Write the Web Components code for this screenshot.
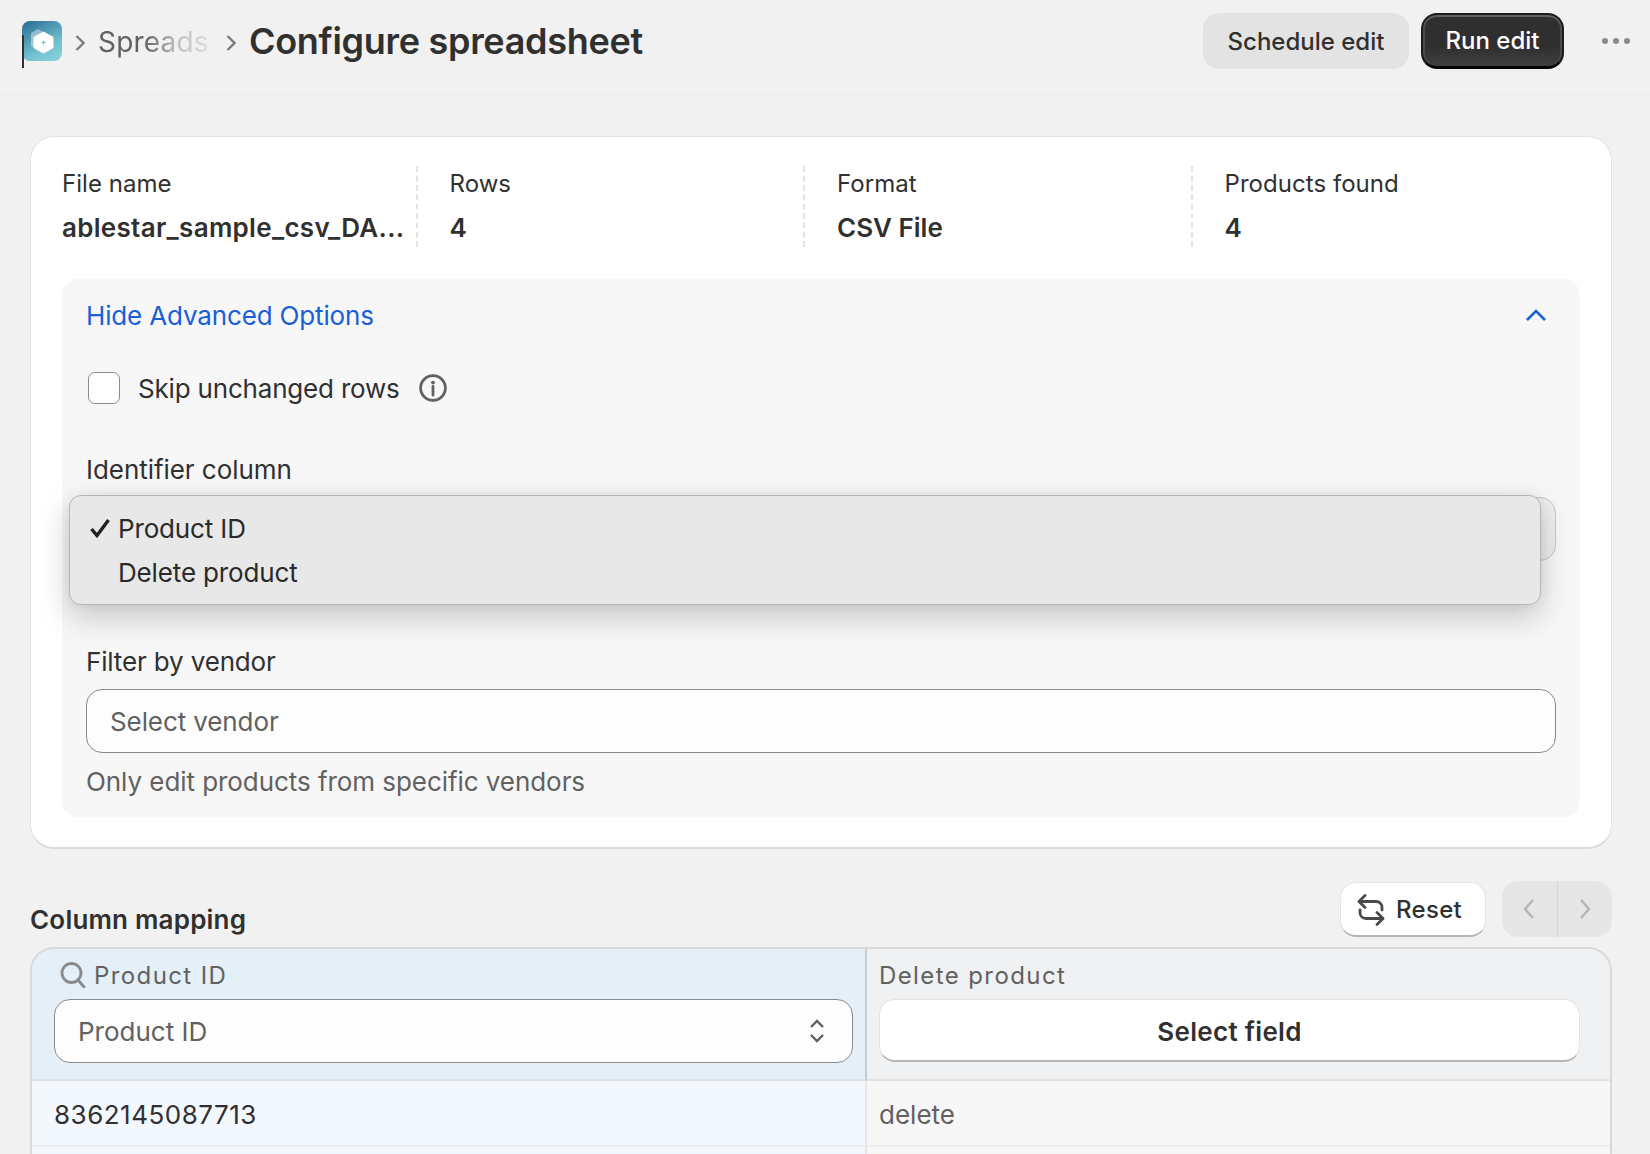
<!DOCTYPE html>
<html>
<head>
<meta charset="utf-8">
<title>Configure spreadsheet</title>
<style>
    html, body { margin: 0; padding: 0; height: 1154px; overflow: hidden; background: #f1f1f1; }
    body { font-family: Inter, "Liberation Sans", sans-serif; color: #303030; }
</style>
</head>
<body>
<page-header></page-header>
<page-body>
    <file-card>
        <stat-row>
            <file-stat label="File name" value="ablestar_sample_csv_DA..." wide></file-stat>
            <file-stat label="Rows" value="4"></file-stat>
            <file-stat label="Format" value="CSV File"></file-stat>
            <file-stat label="Products found" value="4" last></file-stat>
        </stat-row>
        <advanced-options></advanced-options>
    </file-card>
    <column-mapping></column-mapping>
</page-body>

<script>
(function () {
    function make(name, html) {
        let template = document.createElement("template");
        template.innerHTML = html;
        customElements.define(name, class extends HTMLElement {
            constructor() {
                super();
                let shadowRoot = this.attachShadow({ mode: "open" });
                shadowRoot.appendChild(template.content.cloneNode(true));
            }
        });
    }

    make("page-header", `
        <style>
            :host {
                display: flex;
                align-items: center;
                box-sizing: border-box;
                height: 95px;
                padding: 0 20px 12px 22px;
                border-bottom: 1px solid #ebebeb;
                position: relative;
            }
            #logo { width: 40px; height: 40px; display: block; margin-top: -1px; flex: none; }
            #caret { position: absolute; left: 22px; top: 35px; width: 2px; height: 33px; background: #303030; }
            .sep { margin: 3px 13px 0 13px; display: block; flex: none; }
            .sep.second { margin-left: 15px; }
            #crumb {
                width: 113px; font-size: 28px; color: #616161; white-space: nowrap; letter-spacing: .2px; margin-top: 1px;
                -webkit-mask-image: linear-gradient(90deg, #000 40%, rgba(0,0,0,.35) 70%, rgba(0,0,0,.12) 100%);
                mask-image: linear-gradient(90deg, #000 40%, rgba(0,0,0,.35) 70%, rgba(0,0,0,.12) 100%);
            }
            h1 { margin: 0; font-size: 36px; line-height: 44px; font-weight: 600; color: #303030; letter-spacing: -0.3px; white-space: nowrap; }
            #actions { margin-left: auto; display: flex; align-items: center; }
            button { font: 500 24px Inter, sans-serif; height: 56px; border-radius: 16px; border: 0; padding: 0; }
            #sched { width: 206px; background: #e3e3e3; color: #303030; }
            #run {
                width: 143px; margin-left: 12px; color: #fff;
                background: linear-gradient(#2f2f2f 60%, #3f3f3f 100%);
                border: 2px solid #1c1c1c; border-bottom: 3px solid #050505; border-radius: 16px;
                box-shadow: inset 0 2px 0 #626262, inset 2px 0 0 #4a4a4a, inset -2px 0 0 #4a4a4a;
            }
            #more { margin-left: 38px; display: block; }
        </style>
        <svg id="logo" viewBox="0 0 40 40">
            <defs>
                <linearGradient id="lg" x1="0.2" y1="0" x2="0.75" y2="1">
                    <stop offset="0" stop-color="#2f7399"/>
                    <stop offset="0.7" stop-color="#73c2d0"/>
                    <stop offset="1" stop-color="#85d0d8"/>
                </linearGradient>
            </defs>
            <rect width="40" height="40" rx="8" fill="url(#lg)"/>
            <path d="M16 8l6 3.500v14L16 29l-7-4V12z" fill="#fff" opacity=".4"/>
            <path d="M21.500 10.500l10 5.500v11l-10 5.500-10-5.500V16z" fill="#fff"/>
            <path d="M21.500 19.500v4M19.500 21.500h4" stroke="#6cc0d0" stroke-width="1.200"/>
        </svg>
        <div id="caret"></div>
        <svg class="sep" width="10" height="18" viewBox="0 0 10 18"><path d="M1.500 2l7 7-7 7" fill="none" stroke="#7a7a7a" stroke-width="2.300"/></svg>
        <div id="crumb">Spreads</div>
        <svg class="sep second" width="10" height="18" viewBox="0 0 10 18"><path d="M1.500 2l7 7-7 7" fill="none" stroke="#7a7a7a" stroke-width="2.300"/></svg>
        <h1>Configure spreadsheet</h1>
        <div id="actions">
            <button id="sched">Schedule edit</button>
            <button id="run">Run edit</button>
            <svg id="more" width="28" height="8" viewBox="0 0 28 8">
                <circle cx="3" cy="4" r="3" fill="#8a8a8a"/><circle cx="14" cy="4" r="3" fill="#8a8a8a"/><circle cx="25" cy="4" r="3" fill="#8a8a8a"/>
            </svg>
        </div>
    `);

    make("page-body", `
        <style>
            :host { display: block; padding: 41px 38px 0 30px; }
        </style>
        <slot></slot>
    `);

    make("file-card", `
        <style>
            :host {
                display: block;
                box-sizing: border-box;
                height: 713px;
                padding: 29px 31px 30px 31px;
                background: #fff;
                border: 1px solid #e3e3e3;
                border-bottom: 2px solid #dcdcdc;
                border-radius: 24px;
            }
        </style>
        <slot></slot>
    `);

    make("stat-row", `
        <style>
            :host { display: grid; grid-template-columns: repeat(4, 387.5px); height: 81px; margin-bottom: 32px; }
        </style>
        <slot></slot>
    `);

    class FileStat extends HTMLElement {
        constructor() {
            super();
            let shadowRoot = this.attachShadow({ mode: "open" });
            shadowRoot.innerHTML = `
                <style>
                    :host { display: block; box-sizing: border-box; min-width: 0; }
                    :host(:not([last])) { border-right: 2px dashed #e3e3e3; margin-right: 32px; }
                    #l { font-size: 24px; line-height: 30px; margin-top: 3px; letter-spacing: .05px; white-space: nowrap; }
                    #v { font-size: 26px; line-height: 32px; margin-top: 13px; font-weight: 600; white-space: nowrap; }
                    :host([wide]) #v { letter-spacing: .3px; }
                </style>
                <div id="l"></div>
                <div id="v"></div>
            `;
            shadowRoot.getElementById("l").textContent = this.getAttribute("label");
            shadowRoot.getElementById("v").textContent = this.getAttribute("value");
        }
    }
    customElements.define("file-stat", FileStat);

    make("advanced-options", `
        <style>
            :host {
                display: block;
                box-sizing: border-box;
                height: 538px;
                padding: 20px 24px 0;
                background: #f7f7f7;
                border-radius: 16px;
                position: relative;
                font-size: 26px;
                letter-spacing: -.1px;
            }
            #toggle { display: flex; align-items: center; justify-content: space-between; height: 32px; color: #1a5fd6; padding-right: 9px; letter-spacing: -.15px; }
            #skip { display: flex; align-items: center; margin-top: 39px; height: 36px; padding-left: 2px; letter-spacing: -.19px; }
            #box { width: 30px; height: 30px; box-sizing: content-box; background: #fff; border: 1px solid #8a8a8a; border-radius: 7px; margin-right: 18px; }
            #info { margin-left: 19px; display: block; }
            .label { line-height: 32px; }
            #idLabel { margin-top: 48px; letter-spacing: -.05px; }
            #idSelect {
                box-sizing: border-box; height: 64px; margin-top: 11px; border: 1px solid #c9c9c9; border-radius: 16px; background: #eee;
            }
            #vendorLabel { margin-top: 85px; letter-spacing: -.15px; }
            #vendor {
                display: flex; align-items: center; box-sizing: border-box; height: 64px; margin-top: 11px;
                padding-left: 23px; background: #fdfdfd; border: 1px solid #8a8a8a; border-radius: 16px; color: #616161;
            }
            #help { margin-top: 13px; line-height: 32px; color: #616161; letter-spacing: -.06px; }
        </style>
        <div id="toggle">
            <span>Hide Advanced Options</span>
            <svg width="22" height="14" viewBox="0 0 22 14"><path d="M2 12l9-9 9 9" fill="none" stroke="#1a5fd6" stroke-width="2.600"/></svg>
        </div>
        <div id="skip">
            <div id="box"></div>
            <span>Skip unchanged rows</span>
            <svg id="info" width="28" height="28" viewBox="0 0 28 28">
                <circle cx="14" cy="14" r="12.400" fill="none" stroke="#616161" stroke-width="2.800"/>
                <circle cx="14" cy="8.600" r="1.900" fill="#616161"/>
                <path d="M14 12.500v8.500" stroke="#616161" stroke-width="2.800" stroke-linecap="round"/>
            </svg>
        </div>
        <div id="idLabel" class="label">Identifier column</div>
        <div id="idSelect"></div>
        <div id="vendorLabel" class="label">Filter by vendor</div>
        <div id="vendor">Select vendor</div>
        <div id="help">Only edit products from specific vendors</div>
        <option-menu></option-menu>
    `);

    make("option-menu", `
        <style>
            :host {
                position: absolute;
                left: 7px;
                top: 216px;
                box-sizing: border-box;
                width: 1472px;
                height: 110px;
                padding: 16px 0 0 20px;
                background: #e8e8e8;
                border: 1px solid #b5b5b5;
                border-radius: 12px;
                box-shadow: 0 12px 32px rgba(0,0,0,.2), 0 0 12px rgba(0,0,0,.06);
                font-size: 26px;
                letter-spacing: -.15px;
                color: #2a2a2a;
            }
            div { display: flex; align-items: center; height: 32px; margin-bottom: 12px; }
            svg { width: 20px; height: 20px; margin-right: 8px; flex: none; }
            .indent { padding-left: 28px; }
        </style>
        <div>
            <svg viewBox="0 0 20 20"><path d="M1.500 11l5.500 6.500L18.500 2" fill="none" stroke="#222" stroke-width="3.400"/></svg>
            <span>Product ID</span>
        </div>
        <div class="indent"><span>Delete product</span></div>
    `);

    make("column-mapping", `
        <style>
            :host { display: block; margin-top: 32px; }
            #top { display: flex; align-items: flex-end; height: 56px; }
            h2 { margin: 0 0 1px; font-size: 26px; line-height: 32px; font-weight: 600; letter-spacing: .2px; }
            #reset {
                display: flex; align-items: center; justify-content: center; gap: 10px; box-sizing: border-box;
                width: 146px; height: 55px; margin-left: auto; padding: 1px 8px 0 0; background: #fff;
                border: 1px solid #e3e3e3; border-bottom: 2px solid #b5b5b5; border-radius: 16px; font-size: 24px; font-weight: 500; letter-spacing: .3px;
            }
            #pager {
                display: flex; width: 110px; height: 56px; margin-left: 16px; background: #e6e6e6; border-radius: 16px; overflow: hidden;
            }
            #pager div { flex: 1; display: flex; align-items: center; justify-content: center; }
            #pager div:first-child { border-right: 1px solid #d4d4d4; }
            #table {
                display: grid; grid-template-columns: 835px 1fr; margin-top: 10px; height: 222px;
                border: 2px solid #d9d9d9; border-bottom: 0; border-radius: 24px 24px 0 0; overflow: hidden; box-sizing: border-box;
            }
            .head { box-sizing: border-box; height: 132px; padding-top: 8px; border-bottom: 2px solid #e3e3e3; }
            .head.a { background: #e4eff8; border-right: 2px solid #c6cbd0; padding-left: 22px; padding-right: 12px; }
            .head.b { background: #f0f1f3; padding-left: 12px; padding-right: 30px; }
            .title { display: flex; align-items: center; height: 36px; margin-bottom: 6px; font-size: 24px; color: #616161; font-weight: 400; letter-spacing: 1.4px; }
            .a .title { padding-left: 6px; }
            .a .title svg { margin-right: 8px; }
            #sel {
                display: flex; align-items: center; justify-content: space-between; box-sizing: border-box; height: 64px;
                padding: 0 27px 0 23px; background: #fdfdfd; border: 1px solid #8a8a8a; border-radius: 16px; font-size: 26px; color: #616161;
            }
            #pick {
                display: flex; align-items: center; justify-content: center; box-sizing: border-box; height: 63px; margin-top: 1px; padding-top: 2px;
                background: #fff; border: 1px solid #e3e3e3; border-bottom: 2px solid #b5b5b5; border-radius: 16px; font-size: 26px; font-weight: 600; letter-spacing: .3px;
            }
            .cell { box-sizing: border-box; height: 66px; display: flex; align-items: center; font-size: 26px; border-bottom: 2px solid #ececec; padding-top: 2px; }
            .cell.a { background: #f3f8ff; border-right: 2px solid #e3e7ec; padding-left: 22px; color: #303030; letter-spacing: .5px; }
            .cell.b { background: #f7f7f7; padding-left: 12px; color: #616161; }
            .rest { height: 30px; }
            .rest.a { background: #f3f8ff; border-right: 2px solid #e3e7ec; }
            .rest.b { background: #f7f7f7; }
        </style>
        <div id="top">
            <h2>Column mapping</h2>
            <div id="reset">
                <svg width="30" height="32" viewBox="0 0 30 32">
                    <path d="M9 1.500L3 7.500l6 6" fill="none" stroke="#4a4a4a" stroke-width="2.800" stroke-linecap="round" stroke-linejoin="round"/>
                    <path d="M3.500 7.500H20c3.500 0 6 2.500 6 6v2.500M21 30.500l6-6-6-6" fill="none" stroke="#4a4a4a" stroke-width="2.800" stroke-linecap="round" stroke-linejoin="round"/>
                    <path d="M26.500 24.500H10c-3.500 0-6-2.500-6-6V16" fill="none" stroke="#4a4a4a" stroke-width="2.800" stroke-linecap="round"/>
                </svg>
                <span>Reset</span>
            </div>
            <div id="pager">
                <div><svg width="14" height="22" viewBox="0 0 14 22"><path d="M11 2L3 11l8 9" fill="none" stroke="#b5b5b5" stroke-width="2.400"/></svg></div>
                <div><svg width="14" height="22" viewBox="0 0 14 22"><path d="M3 2l8 9-8 9" fill="none" stroke="#b5b5b5" stroke-width="2.400"/></svg></div>
            </div>
        </div>
        <div id="table">
            <div>
                <div class="head a">
                    <div class="title">
                        <svg width="26" height="26" viewBox="0 0 26 26"><circle cx="11.500" cy="11" r="9.500" fill="none" stroke="#8a8a8a" stroke-width="2.800"/><path d="M18 18l6 7" stroke="#8a8a8a" stroke-width="2.800" stroke-linecap="round"/></svg>
                        Product ID
                    </div>
                    <div id="sel">
                        <span>Product ID</span>
                        <svg width="16" height="26" viewBox="0 0 16 26"><path d="M2 9l6-6 6 6M2 17l6 6 6-6" fill="none" stroke="#616161" stroke-width="2.400"/></svg>
                    </div>
                </div>
                <div class="cell a">8362145087713</div>
                <div class="rest a"></div>
            </div>
            <div>
                <div class="head b">
                    <div class="title">Delete product</div>
                    <div id="pick">Select field</div>
                </div>
                <div class="cell b">delete</div>
                <div class="rest b"></div>
            </div>
        </div>
    `);
})();
</script>
</body>
</html>
